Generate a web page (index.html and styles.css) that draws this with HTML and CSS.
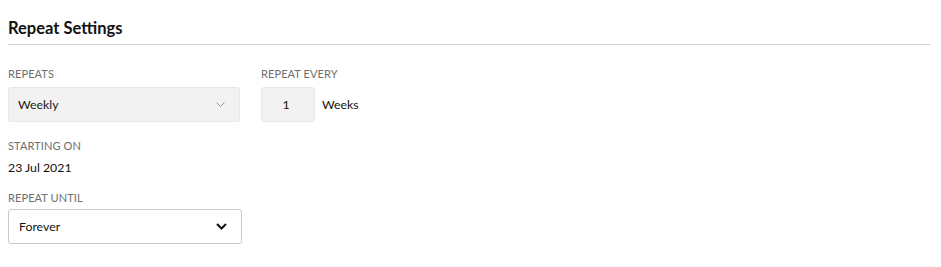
FILE: index.html
```html
<!DOCTYPE html>
<html>
<head>
<meta charset="utf-8">
<link rel="stylesheet" href="styles.css">
</head>
<body>
<div class="page">
  <h2 class="title">Repeat Settings</h2>
  <div class="fields">
    <div class="row">
      <div class="field col-main">
        <div class="label">Repeats</div>
        <div class="select select-disabled">
          <span>Weekly</span>
          <svg class="chev chev-light" width="9" height="5" viewBox="0 0 9 5"><polyline points="0.5,0.5 4.5,4.5 8.5,0.5" fill="none" stroke="#9a9a9a" stroke-width="1"/></svg>
        </div>
      </div>
      <div class="field">
        <div class="label">Repeat every</div>
        <div class="every">
          <div class="num">1</div>
          <span class="unit">Weeks</span>
        </div>
      </div>
    </div>
    <div class="field start">
      <div class="label">Starting on</div>
      <div class="value">23 Jul 2021</div>
    </div>
    <div class="field until">
      <div class="label">Repeat until</div>
      <div class="select select-open">
        <span>Forever</span>
        <svg class="chev" width="11" height="7" viewBox="0 0 11 7"><polyline points="1,1 5.5,5.5 10,1" fill="none" stroke="#111" stroke-width="2"/></svg>
      </div>
    </div>
  </div>
</div>
</body>
</html>
```

FILE: styles.css
```css
* { box-sizing: border-box; }
body {
  margin: 0;
  background: #fff;
  font-family: Lato, "Noto Sans", sans-serif;
  color: #111;
}
.page {
  padding: 0 11px 0 8px;
}
.title {
  margin: 0;
  padding: 18px 0 6px;
  font-size: 16.5px;
  line-height: 20px;
  font-weight: 700;
  color: #111;
  border-bottom: 1px solid #cfcfcf;
}
.fields {
  padding-top: 22px;
}
.row {
  display: flex;
  gap: 21px;
}
.col-main {
  width: 232px;
}
.label {
  font-size: 11px;
  line-height: 14px;
  text-transform: uppercase;
  color: #6e6e6e;
  letter-spacing: 0.1px;
  margin-bottom: 6px;
}
.select {
  height: 35px;
  border-radius: 3px;
  display: flex;
  align-items: center;
  justify-content: space-between;
  font-size: 12.3px;
}
.select-disabled {
  background: #f2f2f2;
  border: 1px solid #e8e8e8;
  padding: 0 14px 0 9px;
  color: #1a1a1a;
}
.select-open {
  width: 234px;
  background: #fff;
  border: 1px solid #c9c9c9;
  padding: 0 14px 0 10px;
}
.chev { display: block; }
.every {
  display: flex;
  align-items: center;
  gap: 7px;
}
.num {
  width: 54px;
  height: 35px;
  background: #f2f2f2;
  border: 1px solid #e8e8e8;
  border-radius: 3px;
  display: flex;
  align-items: center;
  justify-content: center;
  font-size: 12.3px;
  padding-right: 4px;
}
.unit {
  font-size: 12.3px;
}
.start {
  margin-top: 17px;
}
.start .label {
  margin-bottom: 7px;
}
.value {
  font-size: 12.3px;
  line-height: 16px;
}
.until {
  margin-top: 15px;
}
.until .label {
  margin-bottom: 4px;
}
```
